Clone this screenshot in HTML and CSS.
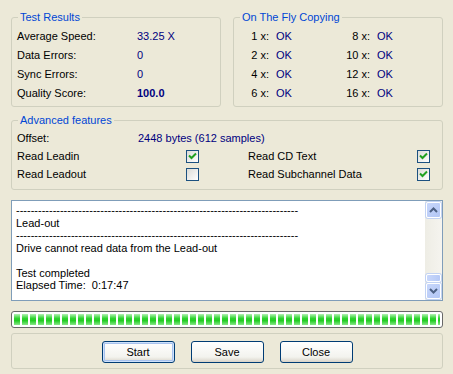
FILE: index.html
```html
<!DOCTYPE html>
<html lang="en">
<head>
    <meta charset="UTF-8">
    <title>Test Results</title>
    <link rel="stylesheet" href="styles.css">
</head>
<body>
    <div class="window">

        <!-- Top groups -->
        <div class="top-row">
            <fieldset class="group results">
                <legend>Test Results</legend>
                <div class="row"><span class="label">Average Speed:</span><span class="value">33.25 X</span></div>
                <div class="row"><span class="label">Data Errors:</span><span class="value">0</span></div>
                <div class="row"><span class="label">Sync Errors:</span><span class="value">0</span></div>
                <div class="row"><span class="label">Quality Score:</span><span class="value bold">100.0</span></div>
            </fieldset>

            <fieldset class="group otf">
                <legend>On The Fly Copying</legend>
                <div class="otf-grid">
                    <span class="speed">1 x:</span><span class="value">OK</span><span class="speed">8 x:</span><span class="value">OK</span>
                    <span class="speed">2 x:</span><span class="value">OK</span><span class="speed">10 x:</span><span class="value">OK</span>
                    <span class="speed">4 x:</span><span class="value">OK</span><span class="speed">12 x:</span><span class="value">OK</span>
                    <span class="speed">6 x:</span><span class="value">OK</span><span class="speed">16 x:</span><span class="value">OK</span>
                </div>
            </fieldset>
        </div>

        <!-- Advanced features -->
        <fieldset class="group advanced">
            <legend>Advanced features</legend>
            <div class="row offset"><span class="label">Offset:</span><span class="value">2448 bytes (612 samples)</span></div>
            <div class="check-row">
                <span class="check-label">Read Leadin</span>
                <span class="checkbox checked"><svg width="11" height="11" viewBox="0 0 11 11"><path d="M2 4.5 L4.5 7 L9 2.5" fill="none" stroke="#21a121" stroke-width="2"/></svg></span>
                <span class="check-label right">Read CD Text</span>
                <span class="checkbox checked"><svg width="11" height="11" viewBox="0 0 11 11"><path d="M2 4.5 L4.5 7 L9 2.5" fill="none" stroke="#21a121" stroke-width="2"/></svg></span>
            </div>
            <div class="check-row">
                <span class="check-label">Read Leadout</span>
                <span class="checkbox"></span>
                <span class="check-label right">Read Subchannel Data</span>
                <span class="checkbox checked"><svg width="11" height="11" viewBox="0 0 11 11"><path d="M2 4.5 L4.5 7 L9 2.5" fill="none" stroke="#21a121" stroke-width="2"/></svg></span>
            </div>
        </fieldset>

        <!-- Log -->
        <div class="log">
            <div class="log-text">-----------------------------------------------------------------------------
Lead-out
-----------------------------------------------------------------------------
Drive cannot read data from the Lead-out

Test completed
Elapsed Time:  0:17:47</div>
            <div class="scrollbar">
                <div class="scroll-btn"><svg width="9" height="6" viewBox="0 0 9 6"><path d="M1 5 L4.5 1.5 L8 5" fill="none" stroke="#4d6185" stroke-width="2"/></svg></div>
                <div class="scroll-track"></div>
                <div class="scroll-thumb"></div>
                <div class="scroll-btn"><svg width="9" height="6" viewBox="0 0 9 6"><path d="M1 1 L4.5 4.5 L8 1" fill="none" stroke="#4d6185" stroke-width="2"/></svg></div>
            </div>
        </div>

        <!-- Progress -->
        <div class="progress">
            <div class="progress-fill"></div>
        </div>

        <!-- Buttons -->
        <fieldset class="group buttons">
            <div class="button-row">
                <button class="btn default">Start</button>
                <button class="btn">Save</button>
                <button class="btn">Close</button>
            </div>
        </fieldset>

    </div>
</body>
</html>
```

FILE: styles.css
```css
body {
    margin: 0;
    padding: 0;
    background-color: #ece9d8;
    font-family: "Liberation Sans", Arial, sans-serif;
    font-size: 11px;
    color: #000;
}
.window {
    width: 453px;
    height: 374px;
    box-sizing: border-box;
    padding: 11px 10px 0 11px;
    background-color: #ece9d8;
}
.top-row {
    display: flex;
    gap: 12px;
}
.group {
    margin: 0;
    min-width: 0;
    border: 1px solid #d0d0bf;
    border-radius: 3px;
    padding: 2px 5px 4px 5px;
    box-sizing: border-box;
}
.group legend {
    color: #0046d5;
    padding: 0 2px;
    margin-left: 1px;
    line-height: 13px;
}
.results,
.otf {
    width: 210px;
}
.row {
    display: flex;
    align-items: center;
    height: 19px;
}
.label {
    width: 120px;
}
.value {
    color: #00007f;
}
.bold {
    font-weight: bold;
}
.otf-grid {
    display: grid;
    grid-template-columns: 30px 57px 30px auto;
    grid-auto-rows: 19px;
    column-gap: 7px;
    align-items: center;
}
.speed {
    text-align: right;
}

/* Advanced features */
.advanced {
    margin-top: 7px;
    padding: 1px 11px 6px 5px;
}
.offset .label {
    width: 121px;
}
.check-row {
    display: flex;
    align-items: center;
    height: 18px;
}
.check-label {
    width: 169px;
}
.check-label.right {
    margin-left: 49px;
}
.checkbox {
    width: 13px;
    height: 13px;
    box-sizing: border-box;
    border: 1px solid #1c5180;
    background: linear-gradient(135deg, #dcdcd7, #ffffff);
    display: flex;
    align-items: center;
    justify-content: center;
}

/* Log */
.log {
    margin-top: 10px;
    height: 101px;
    box-sizing: border-box;
    border: 1px solid #7f9db9;
    background-color: #fff;
    display: flex;
}
.log-text {
    flex: 1;
    padding: 3px 4px;
    white-space: pre;
    line-height: 12.5px;
    overflow: hidden;
}
.scrollbar {
    width: 17px;
    padding: 1px 1px 1px 1px;
    box-sizing: border-box;
    display: flex;
    flex-direction: column;
    gap: 1px;
    background: linear-gradient(90deg, #eeede5, #f5f4ef);
}
.scroll-btn {
    height: 16px;
    box-sizing: border-box;
    border: 1px solid #fff;
    border-radius: 2px;
    background: linear-gradient(135deg, #c8d7fb, #b2c6f5);
    box-shadow: 0 0 0 1px #c3d3f3;
    display: flex;
    align-items: center;
    justify-content: center;
}
.scroll-track {
    flex: 1;
}
.scroll-thumb {
    height: 6px;
    border-radius: 2px;
    border: 1px solid #fff;
    background: linear-gradient(90deg, #c8d7fb, #b6c9f6);
    box-shadow: 0 0 0 1px #c3d3f3;
}

/* Progress */
.progress {
    margin-top: 10px;
    height: 17px;
    box-sizing: border-box;
    border: 1px solid #686868;
    border-radius: 3px;
    padding: 2px 2px 2px 2px;
    background-color: #fff;
}
.progress-fill {
    height: 100%;
    background:
        repeating-linear-gradient(90deg, transparent 0 6px, #fff 6px 8px),
        linear-gradient(#b4f2b4, #2fd32f 40%, #22cc22 60%, #8ae78a);
}

/* Buttons */
.buttons {
    margin-top: 5px;
    height: 36px;
    padding: 7px 0 0 0;
}
.button-row {
    display: flex;
    justify-content: center;
    gap: 16px;
}
.btn {
    width: 73px;
    height: 22px;
    border: 1px solid #003c74;
    border-radius: 3px;
    background: linear-gradient(#ffffff, #f3f3ee 75%, #d8d3c8);
    font-family: "Liberation Sans", Arial, sans-serif;
    font-size: 11px;
    color: #000;
    padding: 0;
    cursor: pointer;
}
.btn.default {
    box-shadow: inset 0 0 0 1px #cee1fb, inset 0 0 0 2px #a7c2ee;
}
```
